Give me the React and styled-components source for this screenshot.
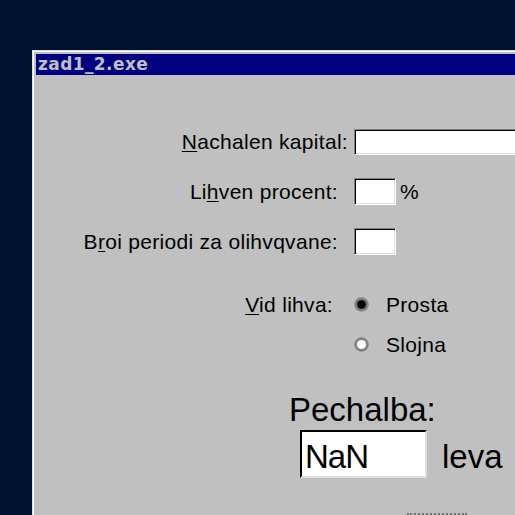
import React from "react";
import styled, { createGlobalStyle } from "styled-components";

const GlobalStyle = createGlobalStyle`
  html, body {
    margin: 0;
    padding: 0;
    background: #00112e;
  }
  * {
    box-sizing: border-box;
  }
`;

const Desktop = styled.div`
  width: 515px;
  height: 515px;
  overflow: hidden;
  background: #00112e;
  padding: 50px 0 0 32px;
`;

const Window = styled.div`
  width: 600px;
  height: 520px;
  background: #c0c0c0;
  border: 1px solid #dfdfdf;
  box-shadow: inset 1px 1px #ffffff;
  padding: 3px;
`;

const TitleBar = styled.div`
  height: 21px;
  background: #000080;
  color: #c0c0c0;
  font-family: "DejaVu Sans", sans-serif;
  font-weight: bold;
  font-size: 17px;
  line-height: 21px;
  padding-left: 2px;
  letter-spacing: 0.4px;
`;

const Body = styled.div`
  padding-top: 54px;
  font-family: "Liberation Sans", Arial, sans-serif;
  font-size: 21px;
  letter-spacing: 0.3px;
  color: #000;
`;

const FieldGrid = styled.div`
  display: grid;
  grid-template-columns: 312px 1fr;
  column-gap: 6px;
  row-gap: ${(p) => p.$gap}px;
  margin-top: ${(p) => p.$top || 0}px;
  align-items: center;
`;

const Label = styled.div`
  justify-self: end;
  padding-right: ${(p) => p.$pad || 0}px;
  line-height: 26px;
  white-space: nowrap;
`;

const Accel = styled.span`
  text-decoration: underline;
  text-underline-offset: 2px;
  text-decoration-thickness: 1px;
`;

const Cell = styled.div`
  display: flex;
  align-items: center;
  gap: ${(p) => p.$gap || 4}px;
  height: 27px;
`;

const TextBox = styled.div`
  width: ${(p) => p.$w}px;
  height: ${(p) => p.$h}px;
  background: #ffffff;
  border: 1px solid;
  border-color: #808080 #ffffff #ffffff #808080;
  box-shadow: inset 1px 1px #000000, inset -1px -1px #dfdfdf;
`;

const Unit = styled.span`
  line-height: 26px;
`;

const RadioText = styled.span`
  line-height: 26px;
`;

const Radio = ({ checked }) => (
  <svg width="15" height="15" viewBox="0 0 15 15">
    <circle cx="7.5" cy="7.5" r="7.2" fill="#808080" />
    <circle cx="7.5" cy="7.5" r="4.6" fill={checked ? "#1a1a1a" : "#ffffff"} />
    {checked && <circle cx="7.5" cy="7.5" r="3.4" fill="#000" />}
  </svg>
);

const Result = styled.div`
  margin-top: 33px;
  padding-left: 253px;
  font-size: 33px;
  letter-spacing: 0;
`;

const ResultTitle = styled.div`
  line-height: 38px;
`;

const ResultRow = styled.div`
  display: flex;
  align-items: baseline;
  gap: 15px;
  margin-top: 1px;
  margin-left: 11px;
`;

const ResultBox = styled.div`
  width: 127px;
  height: 48px;
  background: #ffffff;
  border: 2px solid;
  border-color: #000000 #dfdfdf #dfdfdf #000000;
  padding: 5px 3px 0;
  line-height: 40px;
  letter-spacing: -1px;
`;

const ButtonStub = styled.div`
  width: 60px;
  margin-top: 35px;
  margin-left: 371px;
  border-top: 2px dotted #707070;
`;

export default function App() {
  return (
    <>
      <GlobalStyle />
      <Desktop>
        <Window>
          <TitleBar>zad1_2.exe</TitleBar>
          <Body>
            <FieldGrid $gap={23}>
              <Label>
                <Accel>N</Accel>achalen kapital:
              </Label>
              <TextBox $w={200} $h={26} />

              <Label $pad={10}>
                Li<Accel>h</Accel>ven procent:
              </Label>
              <Cell>
                <TextBox $w={42} $h={27} />
                <Unit>%</Unit>
              </Cell>

              <Label $pad={10}>
                B<Accel>r</Accel>oi periodi za olihvqvane:
              </Label>
              <TextBox $w={42} $h={27} />
            </FieldGrid>

            <FieldGrid $gap={13} $top={36}>
              <Label $pad={15}>
                <Accel>V</Accel>id lihva:
              </Label>
              <Cell $gap={17}>
                <Radio checked />
                <RadioText>Prosta</RadioText>
              </Cell>

              <Label />
              <Cell $gap={17}>
                <Radio />
                <RadioText>Slojna</RadioText>
              </Cell>
            </FieldGrid>

            <Result>
              <ResultTitle>Pechalba:</ResultTitle>
              <ResultRow>
                <ResultBox>NaN</ResultBox>
                <span>leva</span>
              </ResultRow>
            </Result>

            <ButtonStub />
          </Body>
        </Window>
      </Desktop>
    </>
  );
}
